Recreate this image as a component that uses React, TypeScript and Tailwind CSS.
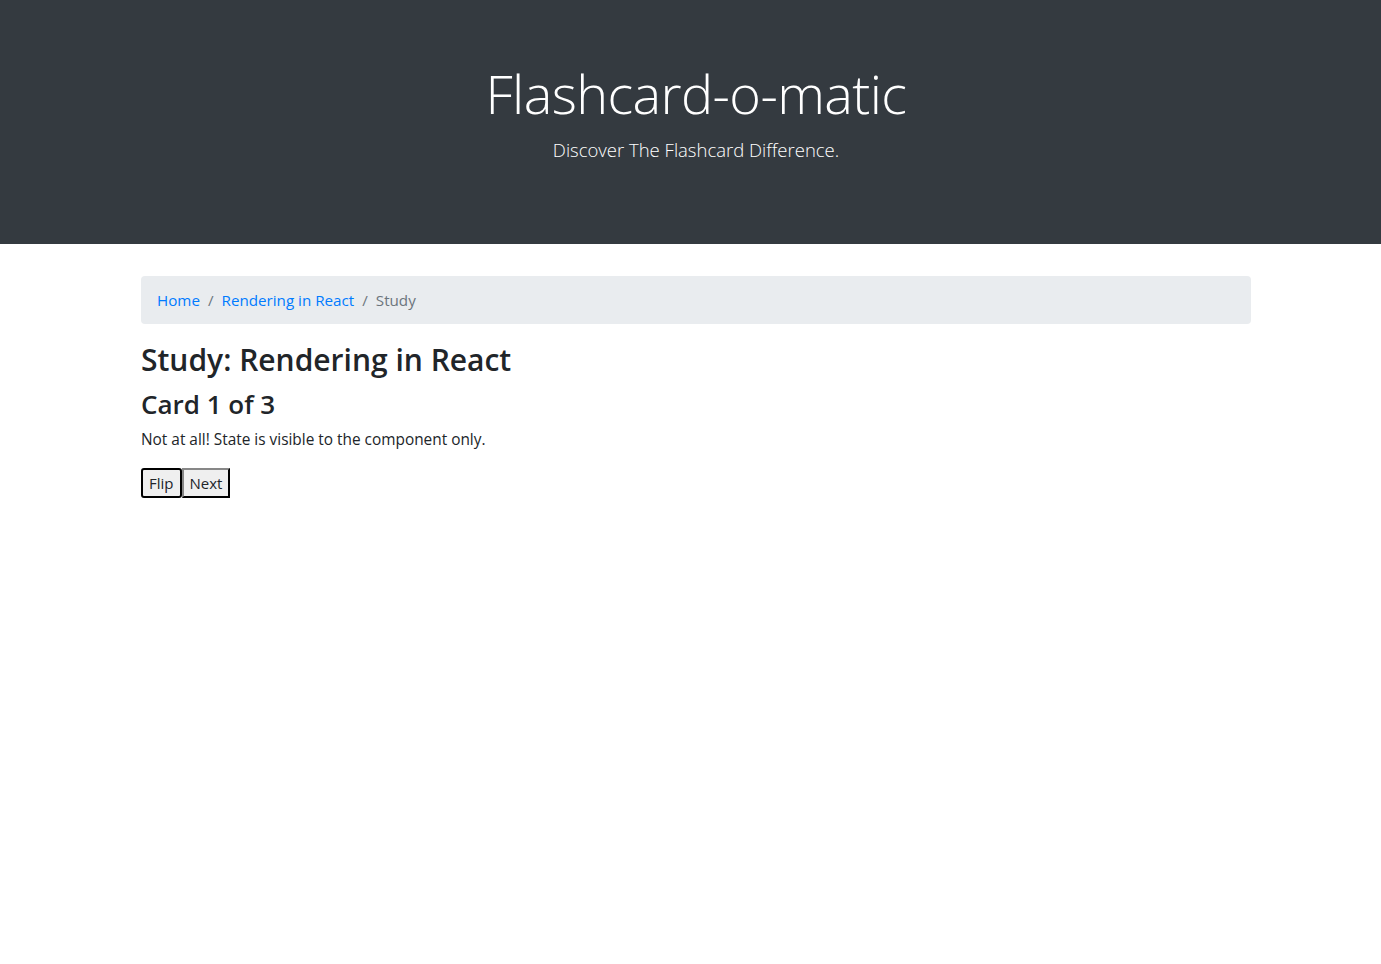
export default function App() {
  const font = "font-['Open_Sans','Noto_Sans',sans-serif]";
  return (
    <div className={`min-h-[964px] bg-white text-[#212529] ${font}`}>
      <header className="bg-[#343a40] pl-[11px] text-center text-white h-[244px] pt-[60px]">
        <h1 className="text-[54px] font-light leading-[1.24] tracking-[-0.6px]">Flashcard-o-matic</h1>
        <p className="mt-[9px] text-[18.5px] font-light leading-[1.5]">Discover The Flashcard Difference.</p>
      </header>

      <div className="pl-[11px] pt-[32px]">
        <main className="mx-auto w-[1110px]">
          <nav className="rounded bg-[#e9ecef] px-4 py-3">
            <ol className="flex items-center text-[15.2px] leading-6">
              <li>
                <a href="#" className="text-[#007bff]">Home</a>
              </li>
              <li className="px-2 text-[#6c757d]">/</li>
              <li>
                <a href="#" className="text-[#007bff]">Rendering in React</a>
              </li>
              <li className="px-2 text-[#6c757d]">/</li>
              <li className="text-[#6c757d]">Study</li>
            </ol>
          </nav>

          <h2 className="mt-[18px] text-[30px] font-semibold leading-[1.2]">Study: Rendering in React</h2>
          <h3 className="mt-[11px] text-[26px] font-semibold leading-[1.2]">Card 1 of 3</h3>
          <p className="mt-[8px] text-[15.4px] leading-6">Not at all! State is visible to the component only.</p>

          <div className="mt-[16px] flex">
            <button className="h-[30px] rounded-[3px] border-2 border-black bg-[#efefef] px-[6px] text-[15px] leading-none">
              Flip
            </button>
            <button className="h-[30px] border-2 border-[#333] bg-[#efefef] px-[6px] text-[15px] leading-none [border-style:outset]">
              Next
            </button>
          </div>
        </main>
      </div>
    </div>
  );
}
